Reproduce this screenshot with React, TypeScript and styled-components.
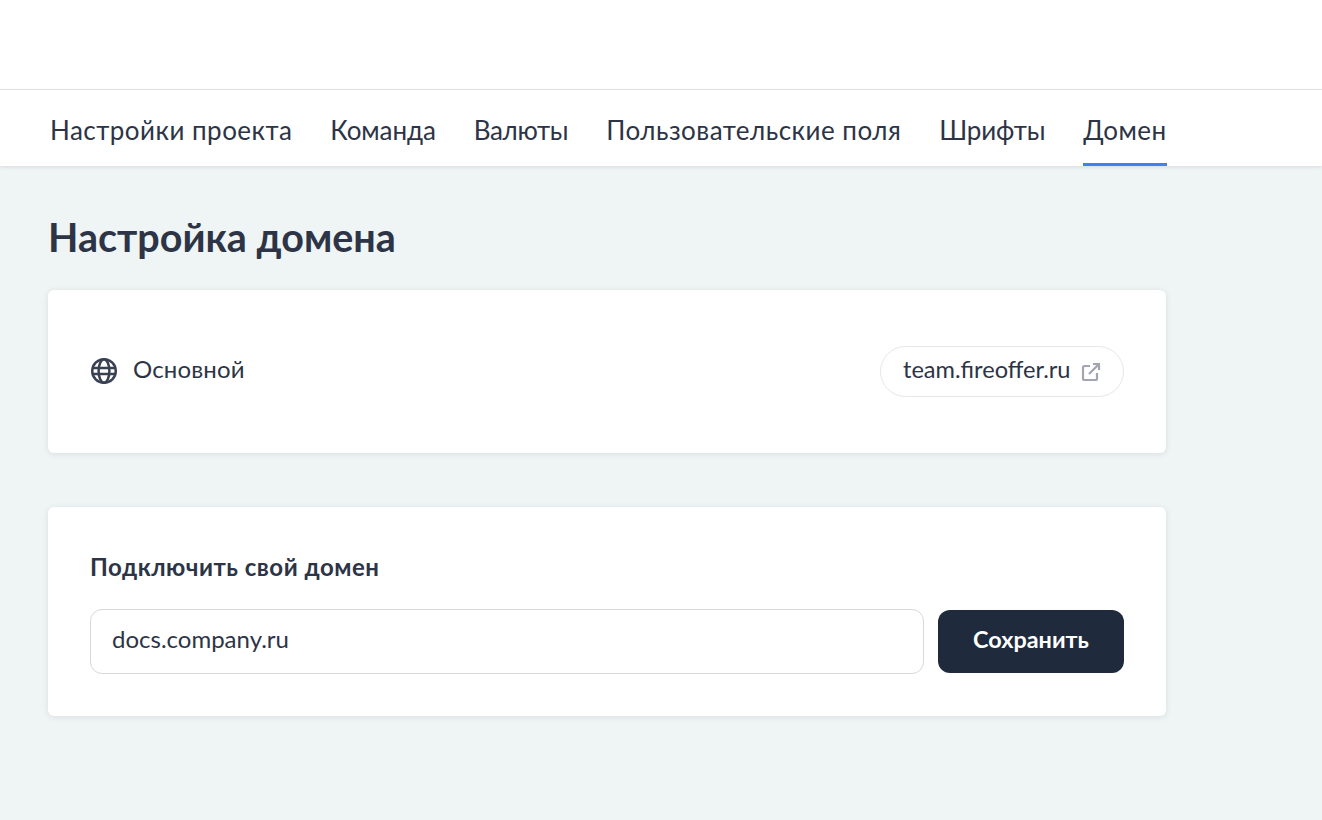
import React from "react";
import styled, { createGlobalStyle } from "styled-components";

const Global = createGlobalStyle`
  html, body { margin: 0; padding: 0; height: 100%; overflow: hidden; }
  body { background: #eff4f4; font-family: "Lato", "Noto Sans", sans-serif; color: #2d3446; }
`;
const Page = styled.div`display: flex; flex-direction: column; height: 820px;`;
const TopBar = styled.header`height: 89px; background: #fff; border-bottom: 1px solid #e4e6e8; flex: none;`;
const TabBar = styled.nav`
  height: 76px; flex: none; background: #fff; display: flex; gap: 38px; padding-left: 50px;
  box-shadow: 0 1px 4px rgba(30, 40, 60, 0.12);
`;
const Tab = styled.a<{ $active?: boolean; $spacing: number }>`
  display: flex; align-items: center; height: 76px; box-sizing: border-box; font-size: 26px;
  padding-top: 6px; color: #2d3446; letter-spacing: ${(p) => p.$spacing}px;
  border-bottom: 3px solid ${(p) => (p.$active ? "#4180f0" : "transparent")};
`;
const Content = styled.main`width: 1118px; margin-left: 48px; display: flex; flex-direction: column;`;
const Title = styled.h1`margin: 49px 0 31px; font-size: 39.500px; line-height: 44px; font-weight: 700; color: #2d3446;`;
const Card = styled.section`
  background: #fff; border-radius: 6px; box-shadow: 0 1px 6px rgba(30, 40, 60, 0.1);
  padding: 0 42px; box-sizing: border-box; margin-bottom: 54px;
`;
const PrimaryRow = styled.div`height: 163px; display: flex; align-items: center; justify-content: space-between;`;
const Label = styled.div`display: flex; align-items: center; gap: 15px; font-size: 24px; letter-spacing: 0.15px;`;
const LabelText = styled.span`position: relative; top: -3px;`;
const Pill = styled.a`
  display: flex; align-items: center; gap: 11px; height: 51px; width: 244px; box-sizing: border-box;
  padding-left: 22px; border: 1px solid #e6e7eb; border-radius: 26px; font-size: 23.600px; color: #2d3446;
`;
const PillText = styled.span`position: relative; top: -3px;`;
const ConnectCard = styled(Card)`height: 209px; padding-top: 45px;`;
const ConnectTitle = styled.h2`margin: 0 0 27px; font-size: 24px; line-height: 30px; font-weight: 700; letter-spacing: 0.5px; color: #2d3446;`;
const FormRow = styled.div`display: flex; align-items: center; gap: 14px;`;
const Input = styled.input`
  flex: 1; height: 65px; box-sizing: border-box; border: 1px solid #d6d8dc; border-radius: 12px; padding: 0 21px 6px;
  font: 24px "Lato", "Noto Sans", sans-serif; color: #2d3446; outline: none; min-width: 0;
`;
const SaveButton = styled.button`
  width: 186px; height: 63px; border: 0; border-radius: 12px; background: #1f2a3d; color: #fff; padding: 0 0 6px;
  font: 700 23.400px "Lato", "Noto Sans", sans-serif;
`;
const GlobeIcon = styled.svg`position: relative; top: -1px;`;

const Globe = () => (
  <GlobeIcon width="28" height="28" viewBox="0 0 28 28" fill="none" stroke="#3a4152" strokeWidth="2.500">
    <circle cx="14" cy="14" r="11.800" />
    <ellipse cx="14" cy="14" rx="5.400" ry="11.800" />
    <path d="M3 11h22M3 17h22" />
  </GlobeIcon>
);
const External = () => (
  <svg width="20" height="20" viewBox="0 0 20 20" fill="none" stroke="#a3a6b1" strokeWidth="2.200">
    <path d="M9 4H3.500A1.500 1.500 0 0 0 2 5.500V17a1 1 0 0 0 1 1h11.500a1.500 1.500 0 0 0 1.500-1.500V11" />
    <path d="M8 12 18 2M12 2h6v6" />
  </svg>
);

export default function App() {
  const tabs: [string, number][] = [
    ["Настройки проекта", 0.47],
    ["Команда", -0.1],
    ["Валюты", -0.32],
    ["Пользовательские поля", 0.48],
    ["Шрифты", -0.17],
    ["Домен", 0.45],
  ];
  return (
    <Page>
      <Global />
      <TopBar />
      <TabBar>
        {tabs.map(([t, s]) => <Tab key={t} $spacing={s} $active={t === "Домен"}>{t}</Tab>)}
      </TabBar>
      <Content>
        <Title>Настройка домена</Title>
        <Card>
          <PrimaryRow>
            <Label><Globe /><LabelText>Основной</LabelText></Label>
            <Pill><PillText>team.fireoffer.ru</PillText><External /></Pill>
          </PrimaryRow>
        </Card>
        <ConnectCard>
          <ConnectTitle>Подключить свой домен</ConnectTitle>
          <FormRow>
            <Input defaultValue="docs.company.ru" />
            <SaveButton>Сохранить</SaveButton>
          </FormRow>
        </ConnectCard>
      </Content>
    </Page>
  );
}
